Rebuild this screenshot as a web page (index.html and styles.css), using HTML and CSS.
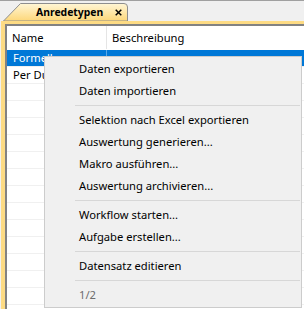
FILE: index.html
```html
<!DOCTYPE html>
<html>
<head>
<meta charset="utf-8">
<link rel="stylesheet" href="styles.css">
</head>
<body>
<div class="app">
  <div class="tabbar">
    <div class="tab">
      <svg class="tab-shape" width="126" height="18" viewBox="0 0 126 18">
        <defs>
          <linearGradient id="tg" x1="0" y1="0" x2="0" y2="1">
            <stop offset="0" stop-color="#fff6d6"/>
            <stop offset="1" stop-color="#fdd779"/>
          </linearGradient>
        </defs>
        <path d="M0.5,18 L17.5,0.5 L121,0.5 Q124.5,0.5 124.5,4 L124.5,18 Z" fill="url(#tg)" stroke="#8e8e8e" stroke-width="1"/>
      </svg>
      <span class="tab-title">Anredetypen</span>
      <svg class="tab-close" width="7" height="7" viewBox="0 0 7 7">
        <path d="M0.7,0.7 L6.3,6.3 M6.3,0.7 L0.7,6.3" stroke="#000" stroke-width="1.5" fill="none"/>
      </svg>
    </div>
  </div>
  <div class="frame">
    <div class="inner">
      <div class="header">
        <div class="hcell c1">Name</div>
        <div class="hcell c2">Beschreibung</div>
      </div>
      <div class="row sel"><div class="cell c1">Formell</div><div class="cell c2"></div></div>
      <div class="row"><div class="cell c1">Per Du</div><div class="cell c2"></div></div>
      <div class="row"><div class="cell c1"></div><div class="cell c2"></div></div>
      <div class="row"><div class="cell c1"></div><div class="cell c2"></div></div>
      <div class="row"><div class="cell c1"></div><div class="cell c2"></div></div>
      <div class="row"><div class="cell c1"></div><div class="cell c2"></div></div>
      <div class="row"><div class="cell c1"></div><div class="cell c2"></div></div>
      <div class="row"><div class="cell c1"></div><div class="cell c2"></div></div>
      <div class="row"><div class="cell c1"></div><div class="cell c2"></div></div>
      <div class="row"><div class="cell c1"></div><div class="cell c2"></div></div>
      <div class="row"><div class="cell c1"></div><div class="cell c2"></div></div>
      <div class="row"><div class="cell c1"></div><div class="cell c2"></div></div>
      <div class="row"><div class="cell c1"></div><div class="cell c2"></div></div>
      <div class="row"><div class="cell c1"></div><div class="cell c2"></div></div>
      <div class="row"><div class="cell c1"></div><div class="cell c2"></div></div>
    </div>
  </div>
  <div class="menu">
    <div class="item">Daten exportieren</div>
    <div class="item">Daten importieren</div>
    <div class="sep"></div>
    <div class="item">Selektion nach Excel exportieren</div>
    <div class="item">Auswertung generieren...</div>
    <div class="item">Makro ausführen...</div>
    <div class="item">Auswertung archivieren...</div>
    <div class="sep"></div>
    <div class="item">Workflow starten...</div>
    <div class="item">Aufgabe erstellen...</div>
    <div class="sep"></div>
    <div class="item">Datensatz editieren</div>
    <div class="sep"></div>
    <div class="item disabled">1/2</div>
  </div>
</div>
</body>
</html>
```
FILE: styles.css
```css
html, body {
  margin: 0;
  padding: 0;
}
body {
  background: #f0f0f0;
}
.app {
  position: relative;
  width: 304px;
  height: 309px;
  overflow: hidden;
  background: #f0f0f0;
  font-family: "Noto Sans", "Open Sans", sans-serif;
  font-size: 11.2px;
  color: #000;
}
.tabbar {
  height: 20px;
  border-top: 1px solid #a0a0a0;
  display: flex;
  align-items: flex-end;
  padding-left: 3px;
}
.tab {
  position: relative;
  flex: none;
  width: 126px;
  height: 18px;
  display: flex;
  align-items: center;
}
.tab-shape {
  position: absolute;
  left: 0;
  top: 0;
}
.tab-title {
  position: relative;
  margin-left: 33px;
  font-weight: bold;
  font-size: 10.4px;
  line-height: 18px;
}
.tab-close {
  position: relative;
  flex: none;
  margin-left: auto;
  margin-right: 7px;
  margin-top: 1px;
}
.frame {
  margin-left: 1px;
  border-left: 4px solid #fddb84;
  border-top: 3px solid #fddb84;
  height: 300px;
}
.inner {
  border-left: 2px solid #828282;
  border-top: 2px solid #828282;
  background: #fff;
  height: 100%;
}
.header {
  display: flex;
  height: 23px;
  border-bottom: 1px solid #fff;
}
.hcell {
  display: flex;
  align-items: center;
  padding-left: 5px;
  box-sizing: border-box;
}
.c1 {
  width: 100px;
  flex: none;
  border-right: 1px solid #e5e5e5;
  box-sizing: border-box;
}
.c2 {
  flex: 1;
}
.row {
  display: flex;
  height: 16px;
  border-bottom: 1px solid #f0f0f0;
}
.cell {
  padding-left: 6px;
  line-height: 16px;
  box-sizing: border-box;
}
.row .c1 {
  border-right: none;
}
.row.sel {
  background: #0078d7;
  color: #fff;
}
.row.sel .c1 {
  border-right: 1px solid #5aa8e6;
}
.menu {
  position: absolute;
  left: 44px;
  top: 56px;
  width: 258px;
  box-sizing: border-box;
  border: 1px solid #cccccc;
  background: #f0f0f0;
  padding: 1px 0;
}
.item {
  height: 22px;
  line-height: 22px;
  padding-left: 34px;
  white-space: nowrap;
}
.item.disabled {
  color: #6d6d6d;
}
.sep {
  height: 1px;
  margin: 3px 1px 3px 30px;
  background: #d7d7d7;
}
```
